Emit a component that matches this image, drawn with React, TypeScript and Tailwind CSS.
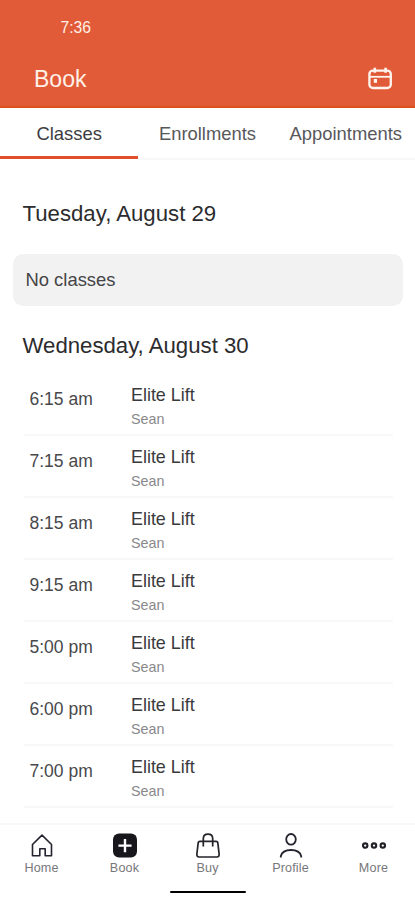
interface ClassItem {
  time: string;
  name: string;
  teacher: string;
}

const times = ["6:15 am", "7:15 am", "8:15 am", "9:15 am", "5:00 pm", "6:00 pm", "7:00 pm"];

const classes: ClassItem[] = times.map((time) => ({
  time,
  name: "Elite Lift",
  teacher: "Sean",
}));

const CalendarIcon = () => (
  <svg width="26" height="24" viewBox="0 0 26 24" fill="none" stroke="#fff5ee" strokeWidth="2.3">
    <rect x="2.4" y="3.6" width="21.4" height="17.4" rx="3.5" />
    <path d="M2.4 9.8h21.4" strokeWidth="1.8" />
    <path d="M7.8 .8v5M18.6 .8v5" strokeWidth="2.6" />
    <rect x="6.8" y="12" width="3.2" height="3.8" fill="#fff5ee" stroke="none" />
  </svg>
);

const HomeIcon = () => (
  <svg width="26" height="26" viewBox="0 0 26 26" fill="none" stroke="#24242e" strokeWidth="1.6">
    <path d="M3.5 11.5 13 2.1l9.5 9.4v11.3h-6.3v-7.1h-5.4v7.1H3.5z" strokeLinejoin="round" />
  </svg>
);

const BookIcon = () => (
  <svg width="26" height="26" viewBox="0 0 26 26">
    <rect x="1" y=".6" width="24" height="24" rx="6" fill="#17171c" />
    <path d="M13 6v13.2M6.4 12.6h13.2" stroke="#fff" strokeWidth="2.4" />
  </svg>
);

const BuyIcon = () => (
  <svg width="26" height="26" viewBox="0 0 26 26" fill="none" stroke="#24242a" strokeWidth="1.7">
    <path d="M5 8.3h16c1.2 0 1.7.5 1.8 1.4l1.3 11.2c.2 2-.6 3.1-2.2 3.1H4.1c-1.6 0-2.4-1.1-2.2-3.1L3.2 9.7C3.3 8.8 3.8 8.3 5 8.3z" />
    <path d="M8.3 13.4V5.8C8.3 2.9 10 1.2 13 1.2s4.7 1.7 4.7 4.6v7.6" />
  </svg>
);

const ProfileIcon = () => (
  <svg width="26" height="26" viewBox="0 0 26 26" fill="none" stroke="#24242e" strokeWidth="1.8">
    <ellipse cx="13" cy="6.3" rx="4.8" ry="5.3" />
    <path d="M2.8 24.4v-1.2c1-4.1 4.5-6.2 10.2-6.2s9.2 2.1 10.2 6.2v1.2" />
  </svg>
);

const MoreIcon = () => (
  <svg width="26" height="26" viewBox="0 0 26 26" fill="none" stroke="#202026" strokeWidth="2.1">
    <circle cx="4.2" cy="12.6" r="2.2" />
    <circle cx="13" cy="12.6" r="2.2" />
    <circle cx="21.8" cy="12.6" r="2.2" />
  </svg>
);

const navItems = [
  { label: "Home", icon: <HomeIcon /> },
  { label: "Book", icon: <BookIcon /> },
  { label: "Buy", icon: <BuyIcon /> },
  { label: "Profile", icon: <ProfileIcon /> },
  { label: "More", icon: <MoreIcon /> },
];

const App = () => {
  return (
    <div className="flex h-[900px] w-[415px] flex-col overflow-hidden bg-white font-['Liberation_Sans',Arial,sans-serif] text-[#2c2c2e]">
      {/* HEADER */}
      <header className="h-[108px] shrink-0 border-b-2 border-[#dd4f1c] bg-[#e25b38] text-[#fff0e8]">
        <p className="pl-[60.5px] pt-[18px] text-[15.7px] leading-5">7:36</p>
        <div className="mt-[27px] flex h-7 items-center justify-between pl-[34px] pr-[22px]">
          <h1 className="text-[23px] leading-7">Book</h1>
          <CalendarIcon />
        </div>
      </header>

      {/* TABS */}
      <nav className="grid h-[52px] shrink-0 grid-cols-3 text-center text-[18.4px] leading-[52px] text-[#58585b]">
        <span className="h-[51px] border-b-[3px] border-[#e04e2c] text-[#3c3c3f]">Classes</span>
        <span className="h-[52px] border-b-2 border-[#f8f8f8]">Enrollments</span>
        <span className="h-[52px] border-b-2 border-[#f8f8f8]">Appointments</span>
      </nav>

      {/* SCHEDULE */}
      <main className="h-[663px] shrink-0">
        <h2 className="pl-[22.5px] pt-10 text-[22.2px] leading-7">Tuesday, August 29</h2>
        <div className="ml-[13px] mr-[12px] mt-[26px] flex h-[52px] items-center rounded-[10px] bg-[#f2f2f2] pl-[12.5px] text-[18.4px] text-[#444446]">
          No classes
        </div>
        <h2 className="pl-[22.5px] pt-[26px] text-[22.2px] leading-7">Wednesday, August 30</h2>

        <ul className="ml-6 mr-[22px] mt-[14px]">
          {classes.map((c) => (
            <li key={c.time} className="flex h-[62px] border-b-2 border-[#f8f8f8]">
              <span className="w-[107px] pl-[5.5px] pt-[13px] text-[17.5px] leading-6 text-[#48484b]">{c.time}</span>
              <div>
                <p className="pt-[9px] text-[17.9px] leading-6 text-[#3a3a3c]">{c.name}</p>
                <p className="pt-[3px] text-[14.3px] leading-[18px] text-[#88888b]">{c.teacher}</p>
              </div>
            </li>
          ))}
        </ul>
      </main>

      {/* BOTTOM BAR */}
      <footer className="h-[77px] shrink-0 border-t-2 border-[#f8f8f8]">
        <div className="grid grid-cols-5 pt-[8px]">
          {navItems.map((item) => (
            <div key={item.label} className="flex flex-col items-center">
              {item.icon}
              <span className="mt-px text-[12.6px] leading-4 tracking-[0.15px] text-[#77777b]">{item.label}</span>
            </div>
          ))}
        </div>
        <div className="mx-auto mt-[15px] h-[2px] w-[76px] rounded-full bg-black" />
      </footer>
    </div>
  );
};

export default App;
